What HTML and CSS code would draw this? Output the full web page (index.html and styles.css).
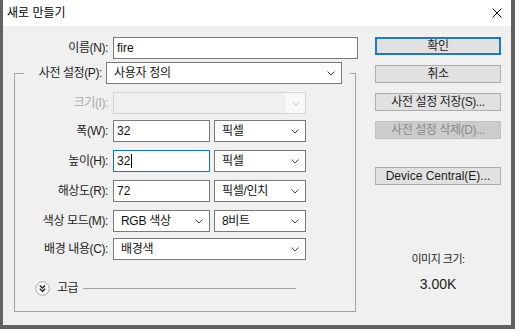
FILE: index.html
```html
<!DOCTYPE html>
<html lang="ko">
<head>
    <meta charset="UTF-8">
    <title>새로 만들기</title>
    <link rel="stylesheet" href="styles.css">
</head>
<body>
    <div class="window">
        <div class="titlebar">
            <span class="title">새로 만들기</span>
            <svg class="close" width="10" height="10" viewBox="0 0 10 10"><path d="M0.5 0.5L9.5 9.5M9.5 0.5L0.5 9.5" stroke="#111" stroke-width="1"/></svg>
        </div>

        <div class="dialog">
            <div class="main">
                <div class="row">
                    <span class="label name-label">이름(N):</span>
                    <div class="field input w-name">fire</div>
                </div>

                <fieldset class="group">
                    <legend class="legend">
                        <div class="row">
                            <span class="label preset-label">사전 설정(P):</span>
                            <div class="field select w-preset">
                                <span>사용자 정의</span>
                                <svg class="chev" width="8" height="5" viewBox="0 0 8 5"><path d="M0.5 0.5L4 4L7.5 0.5" fill="none" stroke="#444"/></svg>
                            </div>
                        </div>
                    </legend>

                    <div class="group-body">
                        <div class="row row-size">
                            <span class="label label-disabled">크기(I):</span>
                            <div class="field select select-disabled w-wide">
                                <span></span>
                                <span class="chev-box"><svg class="chev" width="8" height="5" viewBox="0 0 8 5"><path d="M0.5 0.5L4 4L7.5 0.5" fill="none" stroke="#c4c4c4"/></svg></span>
                            </div>
                        </div>
                        <div class="row">
                            <span class="label">폭(W):</span>
                            <div class="field input w-num">32</div>
                            <div class="field select w-unit">
                                <span>픽셀</span>
                                <svg class="chev" width="8" height="5" viewBox="0 0 8 5"><path d="M0.5 0.5L4 4L7.5 0.5" fill="none" stroke="#444"/></svg>
                            </div>
                        </div>
                        <div class="row">
                            <span class="label">높이(H):</span>
                            <div class="field input input-focus w-num">32<span class="caret"></span></div>
                            <div class="field select w-unit">
                                <span>픽셀</span>
                                <svg class="chev" width="8" height="5" viewBox="0 0 8 5"><path d="M0.5 0.5L4 4L7.5 0.5" fill="none" stroke="#444"/></svg>
                            </div>
                        </div>
                        <div class="row">
                            <span class="label">해상도(R):</span>
                            <div class="field input w-num">72</div>
                            <div class="field select w-unit">
                                <span>픽셀/인치</span>
                                <svg class="chev" width="8" height="5" viewBox="0 0 8 5"><path d="M0.5 0.5L4 4L7.5 0.5" fill="none" stroke="#444"/></svg>
                            </div>
                        </div>
                        <div class="row">
                            <span class="label">색상 모드(M):</span>
                            <div class="field select w-num">
                                <span>RGB 색상</span>
                                <svg class="chev" width="8" height="5" viewBox="0 0 8 5"><path d="M0.5 0.5L4 4L7.5 0.5" fill="none" stroke="#444"/></svg>
                            </div>
                            <div class="field select w-unit">
                                <span>8비트</span>
                                <svg class="chev" width="8" height="5" viewBox="0 0 8 5"><path d="M0.5 0.5L4 4L7.5 0.5" fill="none" stroke="#444"/></svg>
                            </div>
                        </div>
                        <div class="row row-bg">
                            <span class="label">배경 내용(C):</span>
                            <div class="field select w-wide">
                                <span>배경색</span>
                                <svg class="chev" width="8" height="5" viewBox="0 0 8 5"><path d="M0.5 0.5L4 4L7.5 0.5" fill="none" stroke="#444"/></svg>
                            </div>
                        </div>
                    </div>

                    <div class="advanced">
                        <svg class="adv-icon" width="15" height="15" viewBox="0 0 15 15">
                            <circle cx="7.5" cy="7.5" r="6.8" fill="#f8f8f8" stroke="#a9a9a9"/>
                            <path d="M4.8 4.6L7.5 7L10.2 4.6M4.8 7.8L7.5 10.2L10.2 7.8" fill="none" stroke="#222" stroke-width="1.4"/>
                        </svg>
                        <span class="adv-text">고급</span>
                        <span class="adv-line"></span>
                    </div>
                </fieldset>
            </div>

            <div class="actions">
                <div class="btn btn-default">확인</div>
                <div class="btn">취소</div>
                <div class="btn">사전 설정 저장(S)...</div>
                <div class="btn btn-disabled">사전 설정 삭제(D)...</div>
                <div class="btn btn-device">Device Central(E)...</div>

                <div class="image-size">이미지 크기:</div>
                <div class="image-size-value">3.00K</div>
            </div>
        </div>
    </div>
</body>
</html>
```

FILE: styles.css
```css
body {
    margin: 0;
    font-family: "Liberation Sans", "Noto Sans CJK KR", sans-serif;
    font-size: 12px;
    color: #1e1e1e;
    background-color: #f0f0f0;
}

.window {
    width: 515px;
    height: 329px;
    box-sizing: border-box;
    border-style: solid;
    border-color: #626262;
    border-width: 0 4px 4px 3px;
    background-color: #f0f0f0;
    display: flex;
    flex-direction: column;
}

.titlebar {
    height: 26px;
    flex-shrink: 0;
    background-color: #fff;
    display: flex;
    align-items: center;
    justify-content: space-between;
    padding: 0 9px 0 4px;
}

.title {
    line-height: 16px;
    color: #000;
}

.close {
    display: block;
}

.dialog {
    flex: 1;
    display: flex;
}

.main {
    width: 355px;
    padding-top: 11px;
}

.row {
    display: flex;
    align-items: center;
    height: 22px;
}

.label {
    text-align: right;
    white-space: nowrap;
    letter-spacing: -0.4px;
    line-height: 16px;
}

.name-label {
    width: 105px;
    margin-right: 5px;
}

.label-disabled {
    color: #a8a8a8;
}

.field {
    box-sizing: border-box;
    height: 22px;
    border: 1px solid #7a7a7a;
    background-color: #fff;
    display: flex;
    align-items: center;
    line-height: 16px;
    white-space: nowrap;
    color: #111;
}

.input {
    padding-left: 3px;
}

.input-focus {
    border-color: #0078d7;
}

.caret {
    display: inline-block;
    width: 1px;
    height: 14px;
    margin-left: 1px;
    background-color: #000;
}

.select {
    justify-content: space-between;
    padding: 0 6px 0 7px;
    letter-spacing: -0.3px;
}

.chev {
    display: block;
    flex-shrink: 0;
}

.select-disabled {
    border-color: #d4d4d4;
    background-color: #f0f0f0;
    padding: 0;
}

.chev-box {
    height: 100%;
    width: 19px;
    background-color: #f8f8f8;
    display: flex;
    align-items: center;
    justify-content: center;
}

.w-name {
    width: 245px;
}

.w-preset {
    width: 236px;
}

.w-wide {
    width: 193px;
}

.w-num {
    width: 97px;
}

.w-unit {
    width: 92px;
    margin-left: 4px;
}

/* group box around the preset settings */
.group {
    width: 342px;
    box-sizing: border-box;
    min-width: 0;
    margin: 3px 0 0 11px;
    padding: 0 0 15px 0;
    border: 1px solid #a3a3a3;
}

.legend {
    margin-left: 9px;
    padding: 0 8px 0 0;
}

.preset-label {
    width: 78px;
    margin-right: 4px;
}

.group-body {
    margin-top: 8px;
    display: flex;
    flex-direction: column;
    gap: 8px;
}

.group-body .label {
    width: 93px;
    margin-right: 5px;
}

.row-size {
    margin-bottom: -2px;
}

.row-bg {
    margin-top: -2px;
}

.advanced {
    display: flex;
    align-items: center;
    height: 16px;
    margin: 20px 59px 0 20px;
}

.adv-icon {
    display: block;
}

.adv-text {
    margin-left: 7px;
    letter-spacing: -0.5px;
    line-height: 16px;
}

.adv-line {
    flex: 1;
    height: 1px;
    margin-left: 5px;
    background-color: #a3a3a3;
}

/* buttons on the right */
.actions {
    width: 126px;
    margin-left: 17px;
    padding-top: 11px;
    display: flex;
    flex-direction: column;
}

.btn {
    box-sizing: border-box;
    height: 18px;
    border: 1px solid #adadad;
    background-color: #e1e1e1;
    display: flex;
    align-items: center;
    justify-content: center;
    letter-spacing: -0.4px;
    line-height: 16px;
    white-space: nowrap;
}

.btn + .btn {
    margin-top: 10px;
}

.btn-default {
    border: 2px solid #1f79c9;
}

.btn-disabled {
    background-color: #cccccc;
    border-color: #c2c2c2;
    color: #8a8a8a;
}

.btn + .btn-device {
    margin-top: 28px;
    letter-spacing: 0;
}

.image-size {
    margin-top: 66px;
    text-align: center;
    font-size: 11px;
    letter-spacing: -0.5px;
    line-height: 16px;
}

.image-size-value {
    margin-top: 8px;
    text-align: center;
    font-size: 14px;
    line-height: 18px;
}
```
